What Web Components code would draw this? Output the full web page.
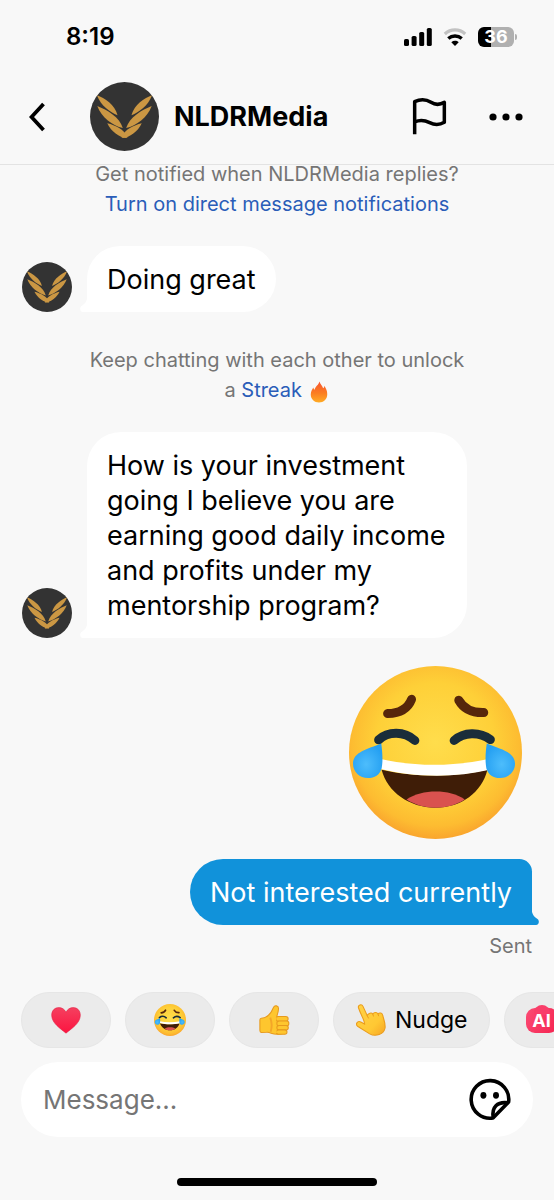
<!DOCTYPE html>
<html lang="en">
<head>
    <meta charset="utf-8">
    <meta name="viewport" content="width=device-width, initial-scale=1">
    <title>NLDRMedia</title>
    <style>
        html, body {
            height: 100%;
        }

        body {
            margin: 0;
            background: #f8f8f8;
            color: #000;
            font-family: Inter, Roboto, sans-serif;
        }
    </style>
</head>
<body>
    <chat-screen>
        <status-bar slot="top" time="8:19" battery="36"></status-bar>
        <chat-header slot="top" name="NLDRMedia"></chat-header>

        <chat-notice>Get notified when NLDRMedia replies?<br><a href="#notifications">Turn on direct message notifications</a></chat-notice>
        <chat-message from="them">Doing great</chat-message>
        <chat-notice>Keep chatting with each other to unlock<br>a <a href="#streak">Streak</a> <chat-icon name="fire" style="--size: 22px; --width: 22px"></chat-icon></chat-notice>
        <chat-message from="them">How is your investment going I believe you are earning good daily income and profits under my mentorship program?</chat-message>
        <chat-sticker name="joy"></chat-sticker>
        <chat-message from="me" status="Sent">Not interested currently</chat-message>

        <quick-replies slot="bottom">
            <quick-reply icon="heart" label="Heart"></quick-reply>
            <quick-reply icon="joy" label="Laugh"></quick-reply>
            <quick-reply icon="thumb" label="Like"></quick-reply>
            <quick-reply icon="nudge">Nudge</quick-reply>
            <quick-reply icon="ai" label="AI"></quick-reply>
        </quick-replies>
        <message-composer slot="bottom"></message-composer>
    </chat-screen>

    <script>
        const ICONS = {
            back: `<svg viewBox="0 0 16 30"><path d="M14 2 2 15l12 13" fill="none" stroke="#000" stroke-width="3.8"/></svg>`,

            flag: `<svg viewBox="405 290 105 117"><path d="M413 402V304c17-8 35-7 49 2s28 7 40 0v60c-14 8-30 8-44 1s-30-9-45-2" fill="none" stroke="#000" stroke-width="10.5" stroke-linejoin="round"/></svg>`,

            more: `<svg viewBox="0 0 34 34"><circle cx="4" cy="17" r="3.6"/><circle cx="17" cy="17" r="3.6"/><circle cx="30" cy="17" r="3.6"/></svg>`,

            sticker: `<svg viewBox="0 0 42 42"><g fill="none" stroke="#000" stroke-width="3.6" stroke-linejoin="round"><path d="M39.6 23.5A18.8 18.8 0 1 0 24 39.5Z"/><path d="M24.2 39.2C22.6 28.5 28 22.8 39.4 24.4"/></g><ellipse cx="14.4" cy="16.8" rx="3" ry="3.4"/><ellipse cx="27" cy="16.8" rx="3" ry="3.4"/></svg>`,

            signal: `<svg viewBox="0 0 28 18"><rect y="11" width="5" height="7" rx="1.6"/><rect x="7.6" y="8" width="5" height="10" rx="1.6"/><rect x="15.2" y="4" width="5" height="14" rx="1.6"/><rect x="22.8" width="5" height="18" rx="1.6"/></svg>`,

            wifi: `<svg viewBox="0 0 24 18"><path d="M1.8 6C7.6.6 16.4.6 22.2 6" fill="none" stroke="#c2c2c2" stroke-width="3.2"/><path d="M5.3 10.600c3.800-3.400 9.600-3.400 13.400 0" fill="none" stroke="#000" stroke-width="3.4"/><path d="M8.300 14.200c2.200-1.900 5.200-1.900 7.400 0L12 18Z"/></svg>`,

            wings: `<svg viewBox="14 19 208 208"><circle cx="118" cy="123" r="104" fill="#333"/><g fill="#cb9743"><g id="w"><path d="M35 59C58 67 89 88 97 119 74 110 47 91 35 59Z"/><path d="M36 91C66 103 103 124 113 158 82 149 49 127 36 91Z"/><path d="M66 143c25 6 50 18 62 42l-5 3C100 184 78 168 66 143Z"/></g><use href="#w" transform="matrix(-1 0 0 1 236 0)"/></g></svg>`,

            fire: `<svg viewBox="0 0 18 24"><defs><linearGradient id="f" x2="0" y2="1"><stop offset="0" stop-color="#f8542f"/><stop offset=".55" stop-color="#fb7d21"/><stop offset="1" stop-color="#ffac24"/></linearGradient></defs><path d="M9.5.5c1 3.500 3.200 4.500 4 7.500 1-.6 1.300-1.500 1.300-2.800C17 8.500 18 11 18 14.500 18 20 14 23.500 9 23.500S0 20 0 14.800C0 11 2 8.500 2.800 7c.3 1.200.7 2 1.500 2.600C4.500 6 8.500 4.500 9.500.5Z" fill="url(#f)"/></svg>`,

            joy: `<svg viewBox="28 33 520 520">
                <defs>
                    <radialGradient id="face" cx=".5" cy=".44" r=".57"><stop offset="0" stop-color="#ffdd4c"/><stop offset=".6" stop-color="#fed038"/><stop offset=".85" stop-color="#fdbc31"/><stop offset="1" stop-color="#f9a22d"/></radialGradient>
                    <radialGradient id="tear" cx=".45" cy=".6" r=".6"><stop offset="0" stop-color="#4dbdfc"/><stop offset="1" stop-color="#25a0f2"/></radialGradient>
                </defs>
                <circle cx="288" cy="293" r="260" fill="url(#face)"/>
                <g fill="none" stroke-width="27" stroke-linecap="round">
                    <path d="M144 176c34-1 61-15 72-43M433 173c-35 1-60-10-75-37" stroke="#56260b"/>
                    <path d="M117 255c28-26 77-27 109 2M344 257c29-26 76-27 109-3" stroke="#1a2d3a"/>
                </g>
                <path d="M126 345c95 23 222 23 318 0-17 68-78 114-156 114S143 412 126 345Z" fill="#3f1d07"/>
                <path d="M201 434c47-31 128-32 175 0-51 33-124 33-175 0Z" fill="#d9524f"/>
                <path d="M120 312c105 24 222 24 330 0v33c-100 24-225 24-330-3Z" fill="#fff"/>
                <path id="t" d="M125 266c4 29 5 55 1 75-6 20-21 29-41 29-25 0-45-19-45-43 0-36 44-44 85-61Z" fill="url(#tear)"/>
                <use href="#t" transform="matrix(-1 0 0 1 567 0)"/>
            </svg>`,

            heart: `<svg viewBox="-1 -3 34 34"><defs><linearGradient id="h" x2="0" y2="1"><stop offset="0" stop-color="#f5405f"/><stop offset="1" stop-color="#fc1440"/></linearGradient></defs><path d="M16 28C10 23 .8 17.500 .8 8.800.8 4 4 .8 8.300.8c3.400 0 6.200 1.800 7.700 4.900C17.500 2.600 20.300.8 23.700.8c4.300 0 7.500 3.200 7.500 8C31.200 17.500 22 23 16 28Z" fill="url(#h)" stroke="#e21b40" stroke-width=".6"/></svg>`,

            thumb: `<svg viewBox="0 0 34 34"><g fill="#fec62e" stroke="#e79a1e" stroke-width="1.1" stroke-linejoin="round"><path d="M2 17c0-1 .5-1.700 1.500-1.800 5.500-.3 10-4.200 12.800-11.200C17.500 1 22 1.300 21.800 5c-.1 2.800-.8 5.200-1.800 8.200l8 1v16.500c-2.500 1.800-10 2-14 .3-2-.9-3.200-1.200-5-1l-5.500.3C2 30.200 2 29 2 28Z"/><rect x="19" y="13.3" width="13" height="5" rx="2.5"/><rect x="20" y="18.1" width="12.8" height="5" rx="2.5"/><rect x="20" y="22.9" width="12.2" height="4.8" rx="2.4"/><rect x="19.5" y="27.5" width="11.3" height="4.6" rx="2.3"/></g><path d="M18.500 14c-1 6-1 12 .5 17" fill="none" stroke="#fec62e" stroke-width="2.5"/><path d="M13 14.500c1.500 4 2 10 .5 15" fill="none" stroke="#f4a628" stroke-width="2"/></svg>`,

            nudge: `<svg viewBox="0 0 34 36"><defs><linearGradient id="n" x2="1" y2="1"><stop offset="0" stop-color="#ffd348"/><stop offset=".65" stop-color="#ffc833"/><stop offset="1" stop-color="#f6a425"/></linearGradient></defs><path d="M3 4.500C1.800 1 6.500-.7 8 2.700L12.700 13C14 10.300 17.500 9.300 19 11.200c1.500-2.200 4.800-2 5.800-.2 2-1.800 5-.8 5.300 1.600 1 4 3.400 9.400 2.700 14.400C31.800 34 22 37.300 15.500 33.600L2.300 25.400C-1 22.900 1.500 18.500 5.500 20.200l4.300 2.300C9.500 17.500 5.500 12 3 4.500Z" fill="url(#n)" stroke="#eb9c1b" stroke-width="1.2"/><path d="m12.700 13 1.600 3.200M19 11.200l.8 2.800M24.800 11l.8 2.700" fill="none" stroke="#eb9c1b" stroke-width="1.1"/></svg>`
        };

        // Base class: opens the shadow root and renders on connect
        class ChatElement extends HTMLElement {
            constructor() {
                super();
                this.attachShadow({ mode: 'open' });
            }

            connectedCallback() {
                this.render();
            }

            attr(name, fallback = '') {
                return this.getAttribute(name) || fallback;
            }
        }

        class ChatIcon extends ChatElement {
            render() {
                this.shadowRoot.innerHTML = `
                    <style>
                        :host {
                            display: inline-block;
                            flex: none;
                            width: var(--width, auto);
                            height: var(--size, 24px);
                            vertical-align: middle;
                        }

                        svg {
                            display: block;
                            width: 100%;
                            height: 100%;
                        }
                    </style>
                    ${ICONS[this.attr('name')]}
                `;
            }
        }

        class ChatScreen extends ChatElement {
            render() {
                this.shadowRoot.innerHTML = `
                    <style>
                        :host {
                            display: flex;
                            flex-direction: column;
                            height: 100%;
                            overflow: hidden;
                        }

                        /* newest messages stay in view, older ones run up under the header */
                        main {
                            flex: 1;
                            min-height: 0;
                            display: flex;
                            flex-direction: column;
                            justify-content: flex-end;
                            overflow: hidden;
                            padding: 0 22px 31px;
                        }

                        header, footer {
                            flex: none;
                        }

                        header {
                            border-bottom: 1px solid #e3e3e3;
                        }

                        .home {
                            width: 36%;
                            height: 8px;
                            margin: 41px auto 14px;
                            border-radius: 4px;
                            background: #000;
                        }
                    </style>
                    <header><slot name="top"></slot></header>
                    <main><slot></slot></main>
                    <footer>
                        <slot name="bottom"></slot>
                        <div class="home"></div>
                    </footer>
                `;
            }
        }

        class StatusBar extends ChatElement {
            render() {
                const level = this.attr('battery');
                this.shadowRoot.innerHTML = `
                    <style>
                        :host {
                            display: flex;
                            align-items: center;
                            gap: 11px;
                            padding: 22px 37px 22px 66px;
                        }

                        time {
                            flex: 1;
                            font-size: 24px;
                            font-weight: 600;
                            line-height: 30px;
                        }

                        .battery {
                            display: flex;
                            align-items: center;
                            gap: 1px;
                        }

                        .level {
                            width: 36px;
                            border-radius: 6px;
                            background: linear-gradient(90deg, #000 ${level}%, #b0b0b0 ${level}%);
                            color: #fff;
                            font-size: 18px;
                            font-weight: 700;
                            line-height: 20px;
                            text-align: center;
                        }

                        .nub {
                            width: 2px;
                            height: 6px;
                            border-radius: 0 2px 2px 0;
                            background: #b0b0b0;
                        }
                    </style>
                    <time>${this.attr('time')}</time>
                    <chat-icon name="signal" style="--size: 18px; --width: 28px"></chat-icon>
                    <chat-icon name="wifi" style="--size: 18px; --width: 24px"></chat-icon>
                    <div class="battery"><span class="level">${level}</span><span class="nub"></span></div>
                `;
            }
        }

        class ChatHeader extends ChatElement {
            render() {
                this.shadowRoot.innerHTML = `
                    <style>
                        :host {
                            display: flex;
                            align-items: center;
                            padding: 8px 31px 13px 29px;
                        }

                        button {
                            display: flex;
                            padding: 0;
                            border: 0;
                            background: none;
                        }

                        .person {
                            flex: 1;
                            display: flex;
                            align-items: center;
                            gap: 15px;
                            margin-left: 44px;
                        }

                        h1 {
                            margin: 0;
                            font-size: 27px;
                            font-weight: 700;
                            line-height: 35px;
                        }

                        .actions {
                            display: flex;
                            align-items: center;
                            gap: 42px;
                        }
                    </style>
                    <button aria-label="Back"><chat-icon name="back" style="--size: 30px; --width: 17px"></chat-icon></button>
                    <div class="person">
                        <chat-icon name="wings" style="--size: 69px; --width: 69px"></chat-icon>
                        <h1>${this.attr('name')}</h1>
                    </div>
                    <div class="actions">
                        <button aria-label="Report"><chat-icon name="flag" style="--size: 39px; --width: 35px"></chat-icon></button>
                        <button aria-label="More"><chat-icon name="more" style="--size: 34px; --width: 34px"></chat-icon></button>
                    </div>
                `;
            }
        }

        class ChatNotice extends ChatElement {
            render() {
                this.shadowRoot.innerHTML = `
                    <style>
                        :host {
                            display: block;
                            flex: none;
                            box-sizing: border-box;
                            width: 100%;
                            max-width: 410px;
                            margin: 33px auto 27px;
                            color: #757575;
                            font-size: 20px;
                            line-height: 30px;
                            text-align: center;
                        }

                        ::slotted(a) {
                            color: #2a5db8;
                            text-decoration: none;
                        }
                    </style>
                    <slot></slot>
                `;
            }
        }

        class ChatMessage extends ChatElement {
            render() {
                const mine = this.attr('from') === 'me';
                const status = this.attr('status');
                this.shadowRoot.innerHTML = `
                    <style>
                        :host {
                            display: flex;
                            flex: none;
                            flex-direction: column;
                        }

                        .row {
                            display: flex;
                            align-items: flex-end;
                            gap: 15px;
                        }

                        .bubble {
                            position: relative;
                            box-sizing: border-box;
                            max-width: 380px;
                            padding: 16px 20px 15px;
                            border-radius: 34px 34px 34px 0;
                            background: #fff;
                            font-size: 27px;
                            line-height: 35px;
                        }

                        .tail {
                            position: absolute;
                            bottom: 0;
                            right: 100%;
                            width: 7px;
                            height: 18px;
                            fill: #fff;
                        }

                        .mine {
                            justify-content: flex-end;
                        }

                        .mine .bubble {
                            border-radius: 34px 13px 0 34px;
                            background: #1192da;
                            color: #fff;
                        }

                        .mine .tail {
                            right: auto;
                            left: 100%;
                            fill: #1192da;
                            transform: scaleX(-1);
                        }

                        .status {
                            margin-top: 6px;
                            color: #757575;
                            font-size: 20px;
                            line-height: 30px;
                            text-align: right;
                        }
                    </style>
                    <div class="row ${mine ? 'mine' : ''}">
                        ${mine ? '' : '<chat-icon name="wings" style="--size: 50px; --width: 50px"></chat-icon>'}
                        <div class="bubble">
                            <slot></slot>
                            <svg class="tail" viewBox="0 0 7 18"><path d="M7.500 0C7.500 6 6 9 1.500 12-.8 13.800 0 18 3 18h4.500Z"/></svg>
                        </div>
                    </div>
                    ${status ? `<div class="status">${status}</div>` : ''}
                `;
            }
        }

        class ChatSticker extends ChatElement {
            render() {
                this.shadowRoot.innerHTML = `
                    <style>
                        :host {
                            display: flex;
                            flex: none;
                            justify-content: flex-end;
                            padding: 28px 10px 20px 0;
                        }
                    </style>
                    <chat-icon name="${this.attr('name')}" style="--size: 173px; --width: 173px"></chat-icon>
                `;
            }
        }

        class QuickReplies extends ChatElement {
            render() {
                this.shadowRoot.innerHTML = `
                    <style>
                        :host {
                            display: flex;
                            gap: 14px;
                            padding: 0 0 14px 21px;
                            overflow: hidden;
                        }
                    </style>
                    <slot></slot>
                `;
            }
        }

        class QuickReply extends ChatElement {
            render() {
                const icon = this.attr('icon');
                const label = this.attr('label');
                this.shadowRoot.innerHTML = `
                    <style>
                        :host {
                            display: block;
                            flex: none;
                        }

                        button {
                            display: flex;
                            align-items: center;
                            justify-content: center;
                            gap: 8px;
                            min-width: 90px;
                            min-height: 56px;
                            padding: 0 21px;
                            border: 1px solid #e6e6e6;
                            border-radius: 28px;
                            background: #ebebeb;
                            color: #000;
                            font: inherit;
                            font-size: 23px;
                        }

                        button.start {
                            justify-content: flex-start;
                        }

                        /* AI badge: rounded tile with a small bump on top */
                        .ai {
                            position: relative;
                            width: 32px;
                            border-radius: 9px;
                            background: linear-gradient(120deg, #fb4b74, #f5234f);
                            color: #fff;
                            font-size: 18px;
                            font-weight: 700;
                            line-height: 25px;
                            text-align: center;
                        }

                        .ai::before {
                            content: "";
                            position: absolute;
                            left: 8px;
                            top: -3px;
                            width: 16px;
                            height: 10px;
                            border-radius: 8px 8px 0 0;
                            background: #f93e69;
                        }

                        .ai span {
                            position: relative;
                        }
                    </style>
                    <button class="${icon === 'ai' ? 'start' : ''}" ${label ? `aria-label="${label}"` : ''}>
                        ${icon === 'ai'
                            ? '<div class="ai"><span>AI</span></div>'
                            : `<chat-icon name="${icon}" style="--size: 32px; --width: 32px"></chat-icon>`}
                        <slot></slot>
                    </button>
                `;
                // no text: drop the slot so the icon is centred
                if (!this.textContent) {
                    this.shadowRoot.querySelector('slot').remove();
                }
            }
        }

        class MessageComposer extends ChatElement {
            render() {
                this.shadowRoot.innerHTML = `
                    <style>
                        :host {
                            display: block;
                            padding: 0 21px;
                        }

                        form {
                            display: flex;
                            align-items: center;
                            gap: 16px;
                            padding: 16px 22px;
                            border-radius: 38px;
                            background: #fff;
                        }

                        input {
                            flex: 1;
                            min-width: 0;
                            padding: 0;
                            border: 0;
                            outline: none;
                            background: none;
                            font: inherit;
                            font-size: 26px;
                            line-height: 35px;
                        }

                        input::placeholder {
                            color: #757575;
                            opacity: 1;
                        }

                        button {
                            display: flex;
                            padding: 0;
                            border: 0;
                            background: none;
                        }
                    </style>
                    <form>
                        <input type="text" placeholder="Message..." aria-label="Message">
                        <button type="button" aria-label="Stickers"><chat-icon name="sticker" style="--size: 43px; --width: 42px"></chat-icon></button>
                    </form>
                `;
            }
        }

        customElements.define('chat-icon', ChatIcon);
        customElements.define('chat-screen', ChatScreen);
        customElements.define('status-bar', StatusBar);
        customElements.define('chat-header', ChatHeader);
        customElements.define('chat-notice', ChatNotice);
        customElements.define('chat-message', ChatMessage);
        customElements.define('chat-sticker', ChatSticker);
        customElements.define('quick-replies', QuickReplies);
        customElements.define('quick-reply', QuickReply);
        customElements.define('message-composer', MessageComposer);
    </script>
</body>
</html>
